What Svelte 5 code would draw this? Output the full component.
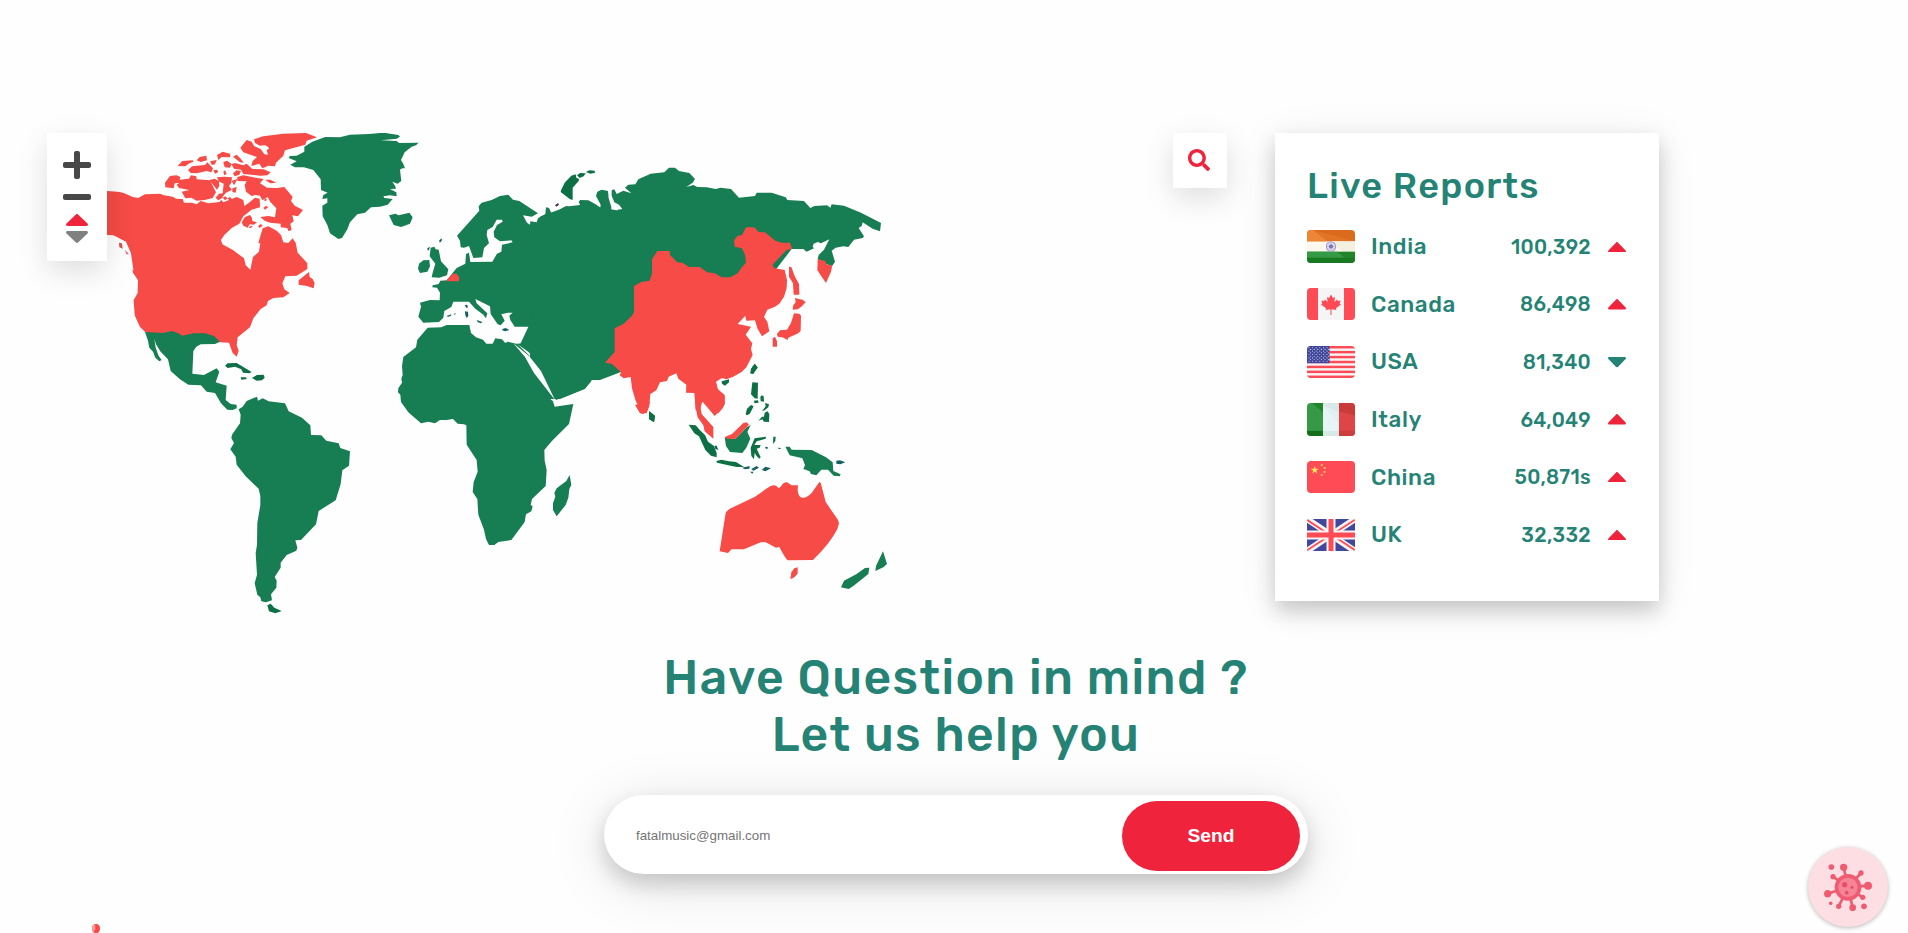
<script>
  const caret =
    'M288.662 352H31.338c-17.818 0-26.741-21.543-14.142-34.142l128.662-128.662c7.81-7.81 20.474-7.81 28.284 0l128.662 128.662c12.6 12.599 3.676 34.142-14.142 34.142z';

  const reports = [
    { code: 'in', name: 'India', value: '100,392', up: true },
    { code: 'ca', name: 'Canada', value: '86,498', up: true },
    { code: 'us', name: 'USA', value: '81,340', up: false },
    { code: 'it', name: 'Italy', value: '64,049', up: true },
    { code: 'cn', name: 'China', value: '50,871s', up: true },
    { code: 'gb', name: 'UK', value: '32,332', up: true }
  ];

  const stripes = [0, 1, 2, 3, 4, 5, 6];
  const unionStars = [0, 1, 2, 3, 4, 5, 6, 7, 8].flatMap((r) =>
    [0, 1, 2, 3, 4, 5].map((c) => ({ x: 2 + c * 3.6 + (r % 2) * 1.6, y: 1.7 + r * 1.7 }))
  );

  // Each region keeps its own drawing origin; all are drawn at a third of their size.
  const regions = [
    {
      x: 30, y: 120,
      shapes: [
        ['red', 'M150 200L231 213Q278 215 288 222L308 231 325 234 345 223 390 221 402 226 428 230 438 236 458 237 462 248 485 248 500 253 512 243 535 250 568 246 574 240 580 247 605 237 620 231 640 240 643 258 655 250 675 233 689 236 690 262 665 269 640 289 628 311 605 324 583 345 573 360 577 373 610 391 642 415 647 436 661 449 669 411 687 395 691 370 685 370 692 345 698 325 715 319 740 332 753 345 760 367 775 369 788 355 797 368 803 398 832 430 832 447 800 467 766 469 757 490 763 508 779 519 760 532 730 534 714 543 710 556 692 567 670 595 660 622 623 652 620 675 626 692 620 710 608 699 597 668 570 667 530 660 400 660 345 635 330 621 314 586 311 540 323 519 324 481 312 462 303 400 288 365 262 352 250 346 231 345 150 340Z'],
        ['red', 'M672 58L700 49 760 41 828 39 861 52 830 62 826 74 765 91 760 107 738 128 735 139 715 137 697 145 688 131 664 138 668 123 681 111 640 97 631 83 650 60 665 65 672 78 692 87 703 103 714 104 710 90 717 86 714 80 705 76 690 77 675 69Z'],
        ['red', 'M443 138L457 123 488 121 491 125 478 130 466 139Z M500 121L509 111 529 107 531 121 512 126Z M474 150L486 139 525 135 532 127 549 145 544 157 530 153 500 160 482 159Z'],
        ['red', 'M561 105L578 95 600 101 601 112 575 111 565 120Z M540 124L560 120 555 133 546 135Z M580 126L591 122 605 132 600 143 584 142Z M609 110L620 104 632 116 641 128 630 127Z M550 151L561 149 565 156 555 161Z M580 155L585 151 590 162 583 166Z'],
        ['red', 'M604 133L615 129 640 136 650 131 667 147 701 148 722 157 712 166 691 167 640 162 633 149 612 146Z M609 160L620 151 633 153 628 164 614 169Z'],
        ['red', 'M405 188L420 168 440 166 451 171 449 179 477 176 483 166 499 169 500 178 540 181 551 203 558 217 548 234 524 240 500 242 484 233 466 235 455 215 478 210 447 204 440 194 448 189 434 190 431 205 406 202Z'],
        ['red', 'M538 180L554 176 567 184 568 198 561 209Z M561 172L582 170 606 172 604 188 597 198 606 209 588 218 577 231 585 241 600 231 608 239 603 245 586 229 565 241 557 233 567 221 578 220 581 191 566 184Z M605 183L623 176 612 196Z M607 205L620 201 617 218 607 216Z'],
        ['red', 'M622 171L640 166 670 172 701 177 690 190 711 203 741 204 763 201 788 231 783 243 794 257 819 270 804 289 787 286 791 304 781 311 785 331 775 333 772 324 752 322 752 311 720 308 704 302 691 291 715 288 735 292 739 265 721 246 713 231 697 241 690 227 676 225 665 228 648 215 644 195 650 184 622 183Z'],
        ['red', 'M635 307L645 291 660 285 666 294 667 303 681 307 672 314 659 313 653 323 640 317Z M702 240L707 235 711 240 705 244Z M700 263L708 258 715 261 705 269Z M684 318L693 312 698 317 689 324Z M656 322L665 317 668 320 660 325Z M705 179L721 179 739 188 721 190Z'],
        ['red', 'M806 481L837 456 839 471 848 477 854 489 851 505 831 498 806 494Z M307 448L323 461 331 470 324 475 309 459Z'],
        ['rust', 'M267 368L276 370 278 386 268 382Z'],
        ['pink', 'M285 389L297 403 289 403Z']
      ]
    },
    {
      x: 270, y: 120,
      shapes: [
        ['green', 'M103 80L127 65 166 51 210 52 240 44 298 42 340 38 385 45 390 50 380 56 333 61 380 63 387 69 446 68 438 76 425 80 404 97 393 120 400 132 405 145 397 145 390 149 394 183 383 191 367 185 375 197 378 206 360 207 379 217 380 229 360 226 340 229 343 234 368 237 353 254 330 260 303 262 285 278 262 283 240 307 232 328 216 354 205 357 180 340 172 315 158 289 157 257 172 248 172 235 157 237 160 225 173 218 153 210 152 178 130 150 102 142 75 142 61 134 80 124 56 114 60 108 80 107 103 95Z'],
        ['green', 'M357 286L376 281 386 286 418 278 428 292 420 311 393 321 371 315Z'],
        ['green', 'M482 383L493 380 497 388 506 389 513 424 535 448 531 466 508 473 485 472 488 458 496 431 479 409Z M447 431L460 421 478 420 480 439 472 455 450 459 444 446Z'],
        ['navy', 'M507 362L515 355 516 361 510 368Z M472 385L480 380 477 389 473 392Z M531 587L545 583 542 588 533 591Z M550 582L558 580 555 584Z M584 556L591 554 594 561 590 565Z M585 574L594 575 595 588 590 594 586 586Z M620 600L637 606 633 610 623 606Z M697 627L707 624 718 630 705 634 697 631Z'],
        ['dark', 'M872 213L884 188 904 167 917 163 919 173 927 177 926 183 908 203 908 240 899 237 873 217Z M921 166L930 159 947 160 941 169 929 174Z M948 156L958 151 974 152 975 158 961 161Z'],
        ['plum', 'M855 256L864 249 867 254 859 260Z'],
        ['green', 'M990 262L960 249 945 243 926 245 930 255 885 260 846 283 837 264 828 262 826 282 804 295 800 307 781 304 780 314 771 308 759 286 785 290 804 280 748 243 729 239 715 224 690 228 665 240 635 248 626 259 628 272 561 347 570 363 572 382 582 383 597 378 610 414 637 412 642 384 657 370 650 345 652 330 668 321 680 299 696 299 698 305 681 315 671 335 673 352 690 364 724 361 728 367 696 374 694 395 681 401 667 425 601 426 597 398 588 402 586 431 560 444 530 481 511 482 506 492 488 496 487 502 501 503 510 518 509 541 480 540 450 548 453 560 445 590 460 608 507 606 520 593 523 573 544 561 550 545 597 545 616 566 640 584 648 595 652 580 620 550 616 537 660 559 662 582 683 613 692 616 704 602 694 583 714 578 728 578 718 587 721 600 734 620 784 620 789 630 784 668 740 671 775 695 807 730 823 780 990 780 1200 700 1200 300Z'],
        ['red', 'M530 481L548 461 560 461 568 473 567 484 532 484Z']
      ]
    },
    {
      x: 560, y: 150,
      shapes: [
        ['green', 'M-60 200L0 178 20 168 28 171 70 167 57 156 60 150 85 151 107 163 121 173 122 164 108 138 112 125 125 119 144 123 146 145 154 170 153 187 145 199 163 195 173 179 187 177 177 164 163 157 155 137 155 121 163 118 170 132 190 122 214 130 195 113 205 104 226 103 235 88 272 71 313 67 327 53 345 53 357 63 388 69 405 87 398 98 379 111 400 105 412 111 440 112 467 117 482 113 513 117 537 143 585 138 590 128 635 128 677 142 682 150 732 153 751 174 763 168 801 166 811 173 815 163 852 167 903 188 963 219 960 244 938 236 908 217 905 228 896 234 912 259 908 264 882 269 865 291 850 289 827 293 815 302 825 335 817 347 795 342 773 327 776 315 792 299 808 268 783 280 773 276 761 281 758 290 762 295 740 305 730 297 695 297 600 420 150 630 100 637 90 623 54 632 31 599 24 598 50 645 87 634 106 673 92 696 75 716 0 747 -100 747Z'],
        ['red', 'M135 638L164 606 164 535 191 521 215 498 222 487 222 408 244 396 269 392 276 370 276 328 292 303 329 303 330 315 352 337 367 338 387 351 419 351 442 367 464 370 485 382 511 382 533 370 546 351 558 338 555 315 546 295 524 290 522 271 533 257 546 256 558 232 583 232 596 246 615 247 646 272 665 278 690 278 696 297 680 300 637 345 644 355 674 360 681 390 680 415 672 440 658 461 645 470 622 479 612 501 622 515 628 544 606 559 593 537 585 511 559 512 556 497 533 522 573 530 557 554 577 580 573 597 578 615 559 652 545 666 518 681 499 688 486 684 468 695 474 718 494 740 494 763 483 780 475 790 455 780 427 754 420 780 407 780 403 729 378 728 379 704 355 686 349 670 326 680 321 693 300 697 289 721 271 732 268 768 260 790 245 790 227 752 216 715 212 681 191 685 179 676 183 667 155 641Z'],
        ['red', 'M687 350L694 351 705 380 717 402 718 434 701 434 699 400 687 380Z M705 444L717 447 728 449 737 457 723 471 713 478 698 479 700 465 707 457Z M702 490L718 491 723 497 722 542 715 550 685 563 683 570 667 562 653 560 651 552 660 541 681 539 693 519Z M638 565L645 560 651 574 651 590 638 590Z M773 327L795 333 802 345 817 346 813 365 798 399 772 361Z'],
        ['dark', 'M573 656L585 642 593 653 578 671 571 670Z M485 694L507 688 507 697 495 707 486 701Z']
      ]
    },
    {
      x: 120, y: 320,
      shapes: [
        ['green', 'M75 36L130 39 155 33 175 40 187 47 220 40 255 40 282 48 300 65 285 72 242 73 229 80 220 93 217 161 252 165 290 145 298 155 287 187 320 197 317 240 332 252 350 254 350 265 338 270 322 269 303 250 285 219 260 215 243 196 205 194 180 178 152 153 144 118 122 95 108 73 103 56 107 83 116 108 125 120 118 124 106 113 99 95 88 83 84 62Z'],
        ['dark', 'M315 137L323 130 350 129 365 138 395 156 388 160 369 158 364 148 345 140 323 144Z M362 172L377 172 381 177 364 179Z M396 174L411 165 431 164 434 173 426 181 410 182Z'],
        ['green', 'M356 268L368 260 380 243 411 230 414 242 428 235 446 244 495 250 506 274 546 293 571 316 573 345 604 346 619 362 656 370 661 384 690 394 687 437 667 451 662 492 647 541 596 573 588 613 543 660 526 661 532 683 529 692 500 705 482 728 482 743 464 771 470 782 469 803 453 823 456 841 438 847 424 844 421 832 412 824 404 790 411 764 407 699 411 675 412 609 421 555 421 528 416 506 377 469 350 434 347 410 331 388 342 369 334 354 336 344 360 310 362 284Z'],
        ['dark', 'M442 856L452 851 463 863 485 873 466 880 447 874Z']
      ]
    },
    {
      x: 380, y: 260,
      shapes: [
        ['green', 'M143 203L184 202 200 195 268 195 273 219 288 232 309 239 319 251 338 251 346 235 366 238 376 249 383 245 412 252 447 286 467 340 488 375 500 408 519 424 524 440 580 432 567 492 515 544 493 570 494 602 500 630 497 678 456 717 452 735 458 739 454 754 438 763 434 786 394 840 355 846 343 855 327 855 318 837 312 809 295 764 292 717 278 696 281 666 293 635 290 600 260 554 259 496 252 493 233 491 219 477 200 480 180 480 165 490 145 485 123 490 85 457 63 426 61 404 54 397 55 385 66 368 64 356 68 345 66 318 70 291 108 262 112 239Z'],
        ['green', 'M421 252L455 282 482 320 498 360 528 420 560 408 615 386 645 342 628 304 594 315 580 300 600 200 450 190Z'],
        ['green', 'M569 645L574 675 568 687 565 713 557 735 530 769 519 750 519 730 526 710 523 699 530 685 559 663Z'],
        ['dark', 'M808 454L825 467 822 487 809 478Z']
      ]
    },
    {
      x: 640, y: 330,
      shapes: [
        ['red', 'M160 130L165 188 167 234 173 262 190 286 194 304 220 326 220 291 185 252 180 225 188 215 224 258 248 235 254 221 254 195 230 175 200 120Z M-15 225L0 250 10 252 22 240 30 215Z'],
        ['dark', 'M331 130L337 110 344 101 353 112 340 132Z M337 157L354 158 353 206 344 205 333 193Z M361 201L365 196 371 199 372 215 362 214Z M341 212L354 211 356 218 344 220Z M317 252L321 236 333 225 341 229 329 252 320 256Z M366 244L377 229 375 219 387 223 385 232 375 240Z M355 272L366 260 372 260 374 248 383 244 388 253 387 276 372 275 367 268Z M27 243L45 258 42 277 27 267Z'],
        ['dark', 'M146 284L167 286 180 301 195 315 204 335 222 348 230 369 230 382 213 377 196 360 177 319 163 310Z M229 393L244 389 267 394 288 396 312 411 290 411 265 406 231 398Z M332 353L344 325 378 320 377 326 350 334 343 345 362 345 359 353 350 356 362 382 358 386 349 377 344 368 342 388 334 378Z M400 320L407 320 406 333 399 342Z'],
        ['green', 'M254 322L286 327 320 292 332 285 322 306 331 326 319 353 307 369 270 366 258 348Z'],
        ['red', 'M254 321L276 312 310 279 320 277 327 284 312 300 286 327 262 326Z'],
        ['navy', 'M223 347L230 347 235 360 226 357Z M306 413L329 408 328 416 315 418Z M334 417L350 408 357 413 340 422Z M330 425L341 425 337 431Z M365 420L376 410 393 415 376 424Z M375 350L382 351 385 355 378 357Z M412 353L424 354 419 358Z M589 392L600 391 616 397 601 403 589 401Z'],
        ['green', 'M436 350L449 350 455 359 515 360 558 382 578 397 580 423 602 433 599 439 581 437 564 419 544 419 529 436 513 432 509 424 490 417 495 405 487 385 449 376Z'],
        ['red', 'M239 664L256 555Q258 543 268 537L345 500 381 475Q400 460 410 469L416 475 424 468Q430 456 441 457L455 466 474 466 473 482Q476 503 488 503 500 504 515 489L538 456 542 458 557 516 594 570 597 580 592 597Q572 638 519 690L443 691Q435 684 418 651L408 653 380 638Q370 633 355 640L312 658 275 658 264 669Z M454 727L463 715 473 712 473 731 463 742 451 748Z'],
        ['green', 'M603 772L612 752 650 732 675 714 688 713 685 732 640 768 626 777Z M729 664L741 702 730 712 706 723 708 708Z']
      ]
    }
  ];
</script>

<main>
  <section class="top">
    <div class="map-area">
      <div class="controls">
        <svg class="zoom-icon" viewBox="0 0 448 512"><path d="M416 208H272V64c0-17.67-14.33-32-32-32h-32c-17.67 0-32 14.33-32 32v144H32c-17.67 0-32 14.33-32 32v32c0 17.67 14.33 32 32 32h144v144c0 17.67 14.33 32 32 32h32c17.67 0 32-14.33 32-32V304h144c17.67 0 32-14.33 32-32v-32c0-17.67-14.33-32-32-32z" /></svg>
        <svg class="zoom-icon" viewBox="0 0 448 512"><path d="M416 208H32c-17.67 0-32 14.33-32 32v32c0 17.67 14.33 32 32 32h384c17.67 0 32-14.33 32-32v-32c0-17.67-14.33-32-32-32z" /></svg>
        <svg class="sort up" viewBox="11 183 298 169" preserveAspectRatio="none"><path d={caret} /></svg>
        <svg class="sort down" viewBox="11 183 298 169" preserveAspectRatio="none"><path d={caret} /></svg>
      </div>
      <svg class="map" viewBox="47 133 842 482">
        {#each regions as region}
          <g transform={`translate(${region.x} ${region.y}) scale(.33333)`}>
            {#each region.shapes as [tone, d]}
              <path class={tone} {d} />
            {/each}
          </g>
        {/each}
        <path class="sea" d="M513.3 343.3L529 356 541 371 555 400 534 373 525 357Z" />
      </svg>
    </div>

    <button class="search" aria-label="Search">
      <svg viewBox="0 0 512 512"><path d="M505 442.7L405.3 343c-4.5-4.5-10.6-7-17-7H372c27.6-35.3 44-79.7 44-128C416 93.1 322.9 0 208 0S0 93.1 0 208s93.1 208 208 208c48.3 0 92.7-16.4 128-44v16.3c0 6.4 2.5 12.5 7 17l99.7 99.7c9.4 9.4 24.6 9.4 33.9 0l28.3-28.3c9.4-9.4 9.4-24.6.1-34zM208 336c-70.7 0-128-57.2-128-128 0-70.7 57.2-128 128-128 70.7 0 128 57.2 128 128 0 70.7-57.2 128-128 128z" /></svg>
    </button>

    <aside class="card">
      <h2>Live Reports</h2>
      <ul>
        {#each reports as r}
          <li>
            <svg class="flag {r.code}" class:tall={r.code === 'in' || r.code === 'it'} viewBox="0 0 48 32" preserveAspectRatio="none">
              {#if r.code === 'in'}
                <rect width="48" height="32" fill="#fbf9ee" />
                <rect width="48" height="11" fill="#dc6a1c" />
                <path d="M0 0H6L21 11H0Z" fill="#ed8737" />
                <path d="M6 0L48 11H21Z" fill="#e27427" />
                <path d="M48 11V21H36L21 11Z" fill="#f4f0df" />
                <rect y="21" width="48" height="11" fill="#218429" />
                <path d="M0 21H30L38 27H0Z" fill="#369946" />
                <rect y="27" width="48" height="5" fill="#177a21" />
                <circle cx="24" cy="16" r="4.6" fill="#e9e6ef" stroke="#9e98ce" stroke-width="1" />
                <circle cx="24" cy="16" r="2" fill="#5e57b0" />
                <path d="M24 12V20M20 16H28M21 13L27 19M27 13L21 19" stroke="#8b86c6" stroke-width=".5" />
              {:else if r.code === 'ca'}
                <rect width="48" height="32" fill="#f5f5f5" />
                <path d="M0 0H11V32H0ZM37 0H48V32H37Z" fill="#ff4b55" />
                <path d="M24 6.5L26 10 28 9 27.4 14 30 11.5 31 13 33.6 12.6 32.7 15.4 34 16.4 29 20.3 29.4 22 24.5 21.3V27H23.5V21.3L18.6 22 19 20.3 14 16.4 15.3 15.4 14.4 12.6 17 13 18 11.5 20.6 14 20 9 22 10Z" fill="#ff4b55" />
              {:else if r.code === 'us'}
                <rect width="48" height="32" fill="#f5f5f5" />
                {#each stripes as s}
                  <rect y={s * 4.923} width="48" height="2.46" fill="#ff4b55" />
                {/each}
                <rect width="22.5" height="17.2" fill="#41479b" />
                {#each unionStars as s}
                  <circle cx={s.x} cy={s.y} r=".55" fill="#d8daf0" />
                {/each}
              {:else if r.code === 'it'}
                <rect width="48" height="32" fill="#e8f5f5" />
                <rect width="16" height="32" fill="#369946" />
                <path d="M5 0H16V9Z" fill="#21842b" />
                <rect y="27" width="16" height="5" fill="#147018" />
                <path d="M16 0H32V9L16 3Z" fill="#d6e9e6" />
                <path d="M16 3L32 20V9Z" fill="#e0f1f0" />
                <rect x="16" y="27" width="16" height="5" fill="#d6e9e6" />
                <rect x="32" width="16" height="32" fill="#df4446" />
                <path d="M32 0H48V12L32 8Z" fill="#c93a3b" />
                <rect x="32" y="27" width="16" height="5" fill="#cb3e3e" />
              {:else if r.code === 'cn'}
                <rect width="48" height="32" fill="#ff4b55" />
                <path d="M7.7 4.7L8.7 7.7H11.8L9.3 9.6 10.2 12.6 7.7 10.8 5.2 12.6 6.1 9.6 3.6 7.7H6.7Z" fill="#ffe15a" />
                <g fill="#ffc94f">
                  <circle cx="14.8" cy="4.2" r="1.1" /><circle cx="17.6" cy="7" r="1.1" />
                  <circle cx="17.6" cy="11" r="1.1" /><circle cx="14.8" cy="14" r="1.1" />
                </g>
              {:else}
                <rect width="48" height="32" fill="#41479b" />
                <path d="M0 0L48 32M48 0L0 32" stroke="#f5f5f5" stroke-width="6.2" />
                <path d="M0 0.8L18 12.8M30 19.2L48 31.2M48 0.8L29 13M19 19L0 31.2" stroke="#ff4b55" stroke-width="1.8" />
                <path d="M24 0V32M0 16H48" stroke="#f5f5f5" stroke-width="9" />
                <path d="M24 0V32M0 16H48" stroke="#ff4b55" stroke-width="5" />
              {/if}
            </svg>
            <span class="name">{r.name}</span>
            <span class="value">{r.value}</span>
            <svg class="trend" class:fall={!r.up} viewBox="11 183 298 169" preserveAspectRatio="none"><path d={caret} /></svg>
          </li>
        {/each}
      </ul>
    </aside>
  </section>

  <section class="ask">
    <h1><span class="first">Have Question in mind ?</span><br /><span class="second">Let us help you</span></h1>
    <form onsubmit={(e) => e.preventDefault()}>
      <input type="email" placeholder="fatalmusic@gmail.com" />
      <button>Send</button>
    </form>
  </section>

  <svg class="pin" viewBox="0 0 8 9"><path d="M4 0C6.5 0 8 1.8 8 4.4 8 7 6.6 9 5 9H3C1 8.500 0 6.500 0 4.200 0 1.700 1.500 0 4 0Z" fill="#fb4a46" /><path d="M3 .5C1 1 0 2.500 0 4.300 0 5.800.6 7 1.600 7.500L3.500 5Z" fill="#ff9c98" /></svg>

  <button class="virus" aria-label="Virus">
    <svg viewBox="54 50 240 240">
      <g stroke="#ef5b70" stroke-width="8">
        <path d="M174 171L161 111M174 171L213 128M174 171L234 166M174 171L218 201M174 171L188 232M174 171L146 228M174 171L112 190M174 171L129 139" />
      </g>
      <g fill="#ef5b70">
        <circle cx="174" cy="171" r="40" />
        <circle cx="161" cy="111" r="11" /><circle cx="213" cy="128" r="8" />
        <circle cx="234" cy="166" r="12" /><circle cx="218" cy="201" r="8" />
        <circle cx="188" cy="232" r="10" /><circle cx="146" cy="228" r="8" />
        <circle cx="113" cy="190" r="11" /><circle cx="129" cy="139" r="8" />
        <circle cx="124" cy="110" r="8.500" /><circle cx="222" cy="228" r="8.500" /><circle cx="122" cy="219" r="5.500" />
      </g>
      <circle cx="174" cy="171" r="29" fill="#f58494" />
      <g fill="#e84f66"><circle cx="164" cy="163" r="8" /><circle cx="186" cy="171" r="4.500" /><circle cx="170" cy="187" r="5.500" /></g>
    </svg>
  </button>
</main>

<style>
  :global(body) {
    background: #fefefe;
    overflow: hidden;
  }
  main {
    position: relative;
    box-sizing: border-box;
    height: 933px;
    padding-top: 133px;
    overflow: hidden;
    font-family: Rubik, Roboto, sans-serif;
    color: #258376;
  }
  svg {
    display: block;
  }
  button {
    border: 0;
    padding: 0;
  }
  .top {
    display: flex;
    align-items: flex-start;
    height: 482px;
    padding-left: 47px;
  }
  .map-area {
    position: relative;
    width: 1126px;
  }
  .map {
    width: 842px;
    height: 482px;
  }
  .controls {
    position: absolute;
    left: 0;
    top: 0;
    box-sizing: border-box;
    width: 60px;
    height: 128px;
    padding-top: 16px;
    display: flex;
    flex-direction: column;
    align-items: center;
    background: #fff;
    box-shadow: 0 10px 30px rgba(0, 0, 0, 0.13);
  }
  .zoom-icon {
    width: 28px;
    height: 32px;
    fill: #484848;
  }
  .sort {
    width: 22px;
    height: 12px;
  }
  .sort.up {
    margin-top: 1px;
    fill: #ef233c;
  }
  .sort.down {
    margin-top: 5px;
    fill: #808080;
    transform: scaleY(-1);
  }
  .green { fill: #177d52; }
  .dark { fill: #0d7045; }
  .red { fill: #f64b46; }
  .navy { fill: #176062; }
  .plum { fill: #452d54; }
  .rust { fill: #d95055; }
  .pink { fill: #f35a82; }
  .sea { fill: #fefefe; }
  .search {
    width: 54px;
    height: 55px;
    margin-right: 48px;
    background: #fff;
    box-shadow: 0 10px 30px rgba(0, 0, 0, 0.13);
  }
  .search svg {
    width: 22px;
    height: 22px;
    margin: -2px auto 0 15px;
    fill: #ef233c;
  }
  .card {
    box-sizing: border-box;
    width: 384px;
    height: 468px;
    padding: 32px;
    background: #fff;
    box-shadow: 0 10px 20px rgba(0, 0, 0, 0.19), 0 5px 40px rgba(0, 0, 0, 0.07);
  }
  h2 {
    margin: 0;
    font-size: 36px;
    line-height: 42px;
    font-weight: 500;
    letter-spacing: 1.3px;
    white-space: nowrap;
  }
  ul {
    list-style: none;
    margin: 11px 0 0;
    padding: 0;
  }
  li {
    display: flex;
    align-items: center;
    height: 57.6px;
  }
  .flag {
    width: 48px;
    height: 32px;
    border-radius: 4px;
  }
  .flag.tall {
    height: 33px;
  }
  .flag.gb {
    border-radius: 2px;
  }
  .name {
    flex: 1;
    padding-left: 16px;
    font-size: 22.4px;
    font-weight: 500;
    letter-spacing: 0.6px;
  }
  .value {
    font-size: 20px;
    font-weight: 500;
    letter-spacing: 0.3px;
  }
  .trend {
    width: 18px;
    height: 10.5px;
    margin: 0 1px 0 17px;
    fill: #ef233c;
  }
  .trend.fall {
    fill: #258376;
    transform: scaleY(-1);
  }
  .ask {
    display: flex;
    flex-direction: column;
    align-items: center;
    padding: 34px 0 0 4px;
  }
  h1 {
    margin: 0;
    font-size: 48px;
    line-height: 57px;
    font-weight: 500;
    text-align: center;
  }
  .first { letter-spacing: 1.4px; }
  .second { letter-spacing: 1.4px; }
  form {
    box-sizing: border-box;
    display: flex;
    align-items: center;
    width: 704px;
    height: 79px;
    margin-top: 32px;
    padding: 2px 8px 0 32px;
    border-radius: 40px;
    background: #fff;
    box-shadow: 0 10px 20px rgba(10, 10, 20, 0.17), 0 10px 60px rgba(0, 0, 0, 0.12);
  }
  input {
    flex: 1;
    border: 0;
    outline: 0;
    padding: 0;
    background: none;
    font: 13.333px "Liberation Sans", Arial, sans-serif;
  }
  input::placeholder {
    color: #757575;
  }
  form button {
    width: 178px;
    height: 70px;
    border-radius: 35px;
    background: #ef233c;
    color: #fff;
    font: bold 19.2px "Liberation Sans", Arial, sans-serif;
  }
  .pin {
    position: absolute;
    left: 92px;
    top: 924px;
    width: 8px;
    height: 9px;
  }
  .virus {
    position: absolute;
    left: 1808px;
    top: 847px;
    width: 80px;
    height: 80px;
    border-radius: 50%;
    background: #fddfe3;
    box-shadow: 0 1px 4px rgba(0, 0, 0, 0.28);
  }
  .virus svg {
    width: 80px;
    height: 80px;
  }
</style>
